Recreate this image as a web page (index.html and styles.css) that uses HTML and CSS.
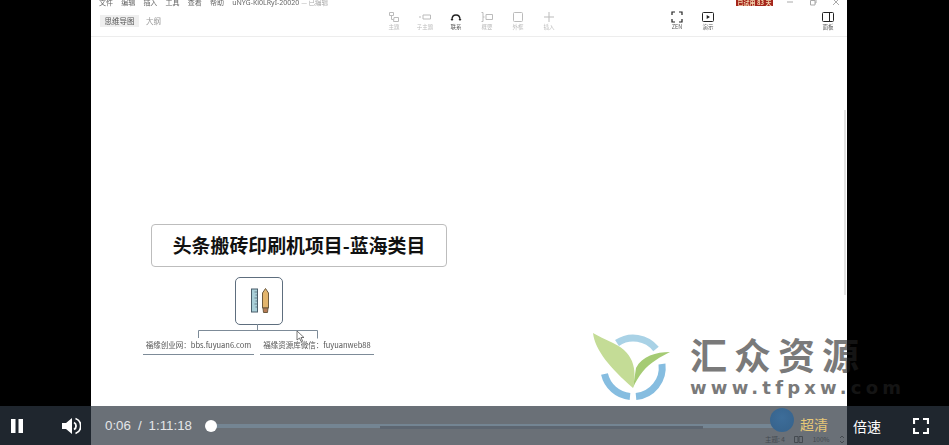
FILE: index.html
```html
<!DOCTYPE html>
<html lang="en">
<head>
  <meta charset="UTF-8">
  <title>视频播放</title>
  <link rel="stylesheet" href="styles.css">
</head>
<body>

<div class="player">
  <div class="stage">
    <div class="canvas">
      <!-- app window inside the video -->
      <div class="menu-row">
        <span class="menu">文件</span>
        <span class="menu">编辑</span>
        <span class="menu">插入</span>
        <span class="menu">工具</span>
        <span class="menu">查看</span>
        <span class="menu">帮助</span>
        <span class="doc-name">uNYG-Ki0LRyI-20020</span>
        <span class="doc-state">— 已编辑</span>
        <span class="trial">已试用 83 天</span>
        <div class="win-btns">
          <svg width="8" height="8" viewBox="0 0 8 8"><path d="M1 4h6" stroke="#aaa"/></svg>
          <svg width="8" height="8" viewBox="0 0 8 8"><path d="M1.500 2.500h4.500v4.500h-4.500zM3 2.500v-1.500h4v4h-1" fill="none" stroke="#aaa"/></svg>
          <svg width="8" height="8" viewBox="0 0 8 8"><path d="M1 1l6 6M7 1l-6 6" stroke="#aaa"/></svg>
        </div>
      </div>
      <div class="tool-row">
        <div class="tabs">
          <span class="tab tab-on">思维导图</span>
          <span class="tab">大纲</span>
        </div>
        <div class="tools">
          <div class="tool tool-off">
            <svg width="12" height="12" viewBox="0 0 12 12"><path d="M1.500 1.500h4v3h-4zM3.500 4.500v4h2M6 6.500h4.500v4h-5z" fill="none" stroke="#bbb"/></svg>
            <span>主题</span>
          </div>
          <div class="tool tool-off">
            <svg width="12" height="12" viewBox="0 0 12 12"><path d="M0 6h2M4 4h7.500v4h-7.500z" fill="none" stroke="#bbb"/></svg>
            <span>子主题</span>
          </div>
          <div class="tool">
            <svg width="12" height="12" viewBox="0 0 12 12"><path d="M2 8.500c0-6 8-6 8 0" fill="none" stroke="#222" stroke-width="1.300"/><path d="M0.500 8h3l-1.500 2zM8.500 8h3l-1.500 2z" fill="#222"/></svg>
            <span>联系</span>
          </div>
          <div class="tool tool-off">
            <svg width="12" height="12" viewBox="0 0 12 12"><path d="M0.500 1.500h1.500v9h-1.500M2 6h1.500M5 3.500h6.500v5h-6.500z" fill="none" stroke="#bbb"/></svg>
            <span>概要</span>
          </div>
          <div class="tool tool-off">
            <svg width="12" height="12" viewBox="0 0 12 12"><rect x="1.500" y="1.500" width="9" height="9" rx="1" fill="none" stroke="#bbb"/></svg>
            <span>外框</span>
          </div>
          <div class="tool tool-off">
            <svg width="12" height="12" viewBox="0 0 12 12"><path d="M6 1v10M1 6h10" stroke="#bbb"/></svg>
            <span>插入</span>
          </div>
        </div>
        <div class="tools-right">
          <div class="tool">
            <svg width="12" height="12" viewBox="0 0 12 12"><path d="M1 4v-3h3M8 1h3v3M11 8v3h-3M4 11h-3v-3" fill="none" stroke="#222" stroke-width="1.200"/></svg>
            <span>ZEN</span>
          </div>
          <div class="tool">
            <svg width="12" height="12" viewBox="0 0 12 12"><rect x="0.500" y="1.500" width="11" height="9" rx="1" fill="none" stroke="#222"/><path d="M4.700 4v4l3.300-2z" fill="#222"/></svg>
            <span>演示</span>
          </div>
        </div>
        <div class="tool tool-panel">
          <svg width="12" height="12" viewBox="0 0 12 12"><rect x="0.500" y="1.500" width="11" height="9" rx="1" fill="none" stroke="#222"/><path d="M7.500 1.500v9" stroke="#222"/></svg>
          <span>面板</span>
        </div>
      </div>

      <!-- mind map -->
      <div class="map">
        <div class="node-title">头条搬砖印刷机项目-蓝海类目</div>
        <div class="node-icon">
          <svg width="28" height="28" viewBox="0 0 28 28">
            <rect x="6.500" y="2" width="6" height="23" fill="#a9cfd8" stroke="#4b5f6c"/>
            <path d="M9.500 5h3M10.500 8h2M9.500 11h3M10.500 14h2M9.500 17h3M10.500 20h2" stroke="#4b5f6c" stroke-width=".7"/>
            <path d="M17.500 6l3-4.500 3 4.500v15h-6z" fill="#e3b56c" stroke="#6d5a3e"/>
            <path d="M18 21h5l-.5 4.500h-4z" fill="#b77b55" stroke="#6d5a3e"/>
          </svg>
        </div>
        <svg class="links" width="130" height="16" viewBox="0 0 130 16">
          <path d="M60.500 0v6.500M1.500 14v-7.500h119v8" fill="none" stroke="#7d8b98"/>
        </svg>
        <div class="node-sub node-sub-a">福缘创业网：bbs.fuyuan6.com</div>
        <div class="node-sub node-sub-b">福缘资源库微信：fuyuanweb88</div>
        <svg class="pointer" width="10" height="13" viewBox="0 0 10 13"><path d="M1 1v9l2.500-2 1.500 3.500 1.500-.7-1.500-3.300h3z" fill="#fff" stroke="#555" stroke-width=".8"/></svg>
      </div>

      <div class="scroll-thumb"></div>
    </div>

    <!-- watermark runs over the canvas edge -->
    <div class="watermark">
      <svg class="wm-logo" width="82" height="70" viewBox="0 0 82 70">
        <path d="M27 11a29 29 0 0 1 39 6" fill="none" stroke="#a9d2e6" stroke-width="7"/>
        <path d="M14.500 42a29 29 0 0 0 25.500 22.500M46 64.500a29 29 0 0 0 26-32.500" fill="none" stroke="#86bde0" stroke-width="7"/>
        <path d="M3 1C5 18 20 36 43 56C46 42 47 22 23 11C15 7 8 4 3 1z" fill="#c4dc96"/>
        <path d="M80 20C66 20 52 24 46 36L43 56C48 44 56 34 66 28C70 25 76 22 80 20z" fill="#a5cb74"/>
      </svg>
      <div class="wm-text">
        <div class="wm-cn">汇众资源</div>
        <div class="wm-en">www.tfpxw.com</div>
      </div>
    </div>
    <div class="letterbox"></div>
  </div>

  <div class="controls">
    <div class="ctrl-left">
      <svg width="14" height="16" viewBox="0 0 14 16"><path d="M1 1h4.500v14h-4.500zM8.500 1h4.500v14h-4.500z" fill="#fff"/></svg>
      <svg class="vol" width="20" height="20" viewBox="0 0 20 20"><path d="M1 7h4l6-5v16l-6-5h-4z" fill="#fff"/><path d="M13 6.500a4 4 0 0 1 0 7M14.500 2.500a8 8 0 0 1 0 15" fill="none" stroke="#fff" stroke-width="1.800"/></svg>
    </div>
    <div class="ctrl-mid">
      <span class="time">0:06</span>
      <span class="time-sep">/</span>
      <span class="time">1:11:18</span>
      <div class="track">
        <div class="knob"></div>
        <div class="buffered"></div>
      </div>
      <div class="avatar"></div>
      <span class="quality">超清</span>
      <div class="status">
        <span>主题: 4</span>
        <svg width="9" height="7" viewBox="0 0 9 7"><path d="M.5.500h3.500v6h-3.500zM5 .500h3.500v6h-3.500z" fill="none" stroke="#444a50"/></svg>
        <span>100%</span>
        <svg width="6" height="9" viewBox="0 0 6 9"><path d="M1 3l2-2 2 2M1 6l2 2 2-2" fill="none" stroke="#444a50"/></svg>
      </div>
    </div>
    <div class="ctrl-right">
      <span class="speed">倍速</span>
      <svg width="16" height="16" viewBox="0 0 16 16"><path d="M1 6v-5h5M10 1h5v5M15 10v5h-5M6 15h-5v-5" fill="none" stroke="#fff" stroke-width="2.200"/></svg>
    </div>
  </div>
</div>

</body>
</html>
```

FILE: styles.css
```css
* {
  box-sizing: border-box;
}
body {
  margin: 0;
  background-color: #000;
  font-family: "Noto Sans CJK SC", "Liberation Sans", sans-serif;
}
.player {
  width: 949px;
  height: 445px;
  display: flex;
  flex-direction: column;
  overflow: hidden;
}
.stage {
  position: relative;
  height: 406px;
  padding-left: 91px;
}
.canvas {
  position: relative;
  width: 756px;
  height: 406px;
  background-color: #fff;
  overflow: hidden;
}

/* app header */
.menu-row {
  height: 4px;
  padding-left: 8px;
  display: flex;
  align-items: center;
  font-size: 7px;
  line-height: 7px;
  color: #666;
  filter: blur(.3px);
  white-space: nowrap;
}
.menu {
  width: 22.200px;
}
.doc-name {
  width: 69px;
  font-size: 7px;
  color: #666;
  font-family: "Noto Sans", sans-serif;
}
.doc-state {
  color: #aaa;
  font-size: 6.500px;
}
.trial {
  margin-left: auto;
  align-self: flex-start;
  margin-top: -1px;
  width: 37px;
  height: 7px;
  background-color: #a5261c;
  color: #f3d6b0;
  font-size: 6px;
  font-weight: bold;
  text-align: center;
}
.win-btns {
  width: 74px;
  padding: 0 7px 0 13px;
  display: flex;
  justify-content: space-between;
}
.tool-row {
  height: 33px;
  padding: 5px 0 0 9px;
  border-bottom: 1px solid #ededed;
  display: flex;
  align-items: flex-start;
  position: relative;
}
.tabs {
  display: flex;
  align-items: center;
  gap: 7px;
  margin-top: 6px;
  width: 284px;
  font-size: 7.500px;
  color: #999;
  filter: blur(.3px);
}
.tab {
  height: 12px;
  line-height: 12px;
}
.tab-on {
  width: 39px;
  background-color: #efefef;
  color: #555;
  text-align: center;
}
.tools {
  display: flex;
  gap: 11px;
  margin-top: 2px;
}
.tools-right {
  display: flex;
  gap: 11px;
  margin-left: 108px;
  margin-top: 2px;
}
.tool {
  width: 20px;
  display: flex;
  flex-direction: column;
  align-items: center;
  font-size: 5.500px;
  line-height: 9px;
  color: #555;
}
.tool span {
  filter: blur(.25px);
}
.tool-off {
  color: #bbb;
}
.tool-panel {
  margin-left: 100px;
  margin-top: 2px;
}

/* mind map, nodes sit on a free canvas */
.map {
  position: absolute;
  left: 0;
  top: 0;
  width: 756px;
  height: 406px;
}
.node-title {
  position: absolute;
  left: 60px;
  top: 224px;
  width: 296px;
  height: 43px;
  border: 1px solid #bdbdbd;
  border-radius: 4px;
  font-size: 18.900px;
  font-weight: bold;
  line-height: 40px;
  text-align: center;
  color: #111;
}
.node-icon {
  position: absolute;
  left: 144px;
  top: 277px;
  width: 48px;
  height: 48px;
  border: 1px solid #5e6e7e;
  border-radius: 5px;
  display: flex;
  align-items: center;
  justify-content: center;
}
.links {
  position: absolute;
  left: 106px;
  top: 324px;
}
.node-sub {
  position: absolute;
  top: 338px;
  height: 17px;
  border-bottom: 1px solid #7d8b98;
  font-size: 7.500px;
  line-height: 14px;
  text-align: center;
  color: #555;
  white-space: nowrap;
  filter: blur(.2px);
}
.node-sub-a {
  left: 52px;
  width: 111px;
}
.node-sub-b {
  left: 169px;
  width: 114px;
}
.pointer {
  position: absolute;
  left: 205px;
  top: 330px;
}
.scroll-thumb {
  position: absolute;
  right: 1px;
  top: 110px;
  width: 2px;
  height: 185px;
  background-color: #e2e2e2;
}

/* watermark */
.watermark {
  position: absolute;
  left: 590px;
  top: 332px;
  display: flex;
  gap: 18px;
}
.wm-text {
  width: 216px;
  margin-top: 2px;
  font-weight: bold;
  color: #7a7a7a;
}
.wm-cn {
  font-size: 37px;
  line-height: 41px;
  letter-spacing: 7px;
  white-space: nowrap;
}
.wm-en {
  font-family: "DejaVu Sans", sans-serif;
  font-size: 18px;
  line-height: 26px;
  letter-spacing: 4.200px;
  white-space: nowrap;
}
/* black side of the video dims the watermark that runs past it */
.letterbox {
  position: absolute;
  left: 847px;
  top: 0;
  width: 102px;
  height: 406px;
  background-color: rgba(0, 0, 0, .84);
}

/* player controls */
.controls {
  height: 39px;
  display: flex;
  background-color: #1f262e;
  color: #fff;
}
.ctrl-left {
  width: 91px;
  padding-left: 10px;
  display: flex;
  align-items: center;
  gap: 37px;
}
.ctrl-mid {
  position: relative;
  width: 756px;
  padding-left: 14px;
  display: flex;
  align-items: center;
  background-color: #6a7077;
  font-family: "Liberation Sans", sans-serif;
  font-size: 13.300px;
  color: #e4e6e8;
}
.time-sep {
  margin: 0 7px;
}
.track {
  position: absolute;
  left: 120px;
  top: 18px;
  width: 564px;
  height: 4px;
  background-color: #748593;
}
.buffered {
  position: absolute;
  left: 169px;
  top: 2px;
  width: 323px;
  height: 3px;
  background-color: #5d6671;
}
.knob {
  position: absolute;
  left: -6px;
  top: -4px;
  width: 12px;
  height: 12px;
  border-radius: 50%;
  background-color: #fff;
  z-index: 1;
}
.avatar {
  position: absolute;
  left: 679px;
  top: 2px;
  width: 24px;
  height: 24px;
  border-radius: 50%;
  background: radial-gradient(circle at 50% 40%, #3d6d99, #35618a);
}
.quality {
  position: absolute;
  left: 709px;
  top: 8px;
  font-family: "Noto Sans CJK SC", sans-serif;
  font-size: 14px;
  line-height: 20px;
  color: #e8c877;
}
.status {
  position: absolute;
  left: 674px;
  bottom: 1px;
  width: 80px;
  display: flex;
  align-items: center;
  justify-content: space-between;
  font-family: "Noto Sans CJK SC", sans-serif;
  font-size: 6.500px;
  line-height: 10px;
  color: #444a50;
}
.ctrl-right {
  flex: 1;
  padding: 0 20px 0 6px;
  display: flex;
  align-items: center;
  justify-content: space-between;
}
.speed {
  font-size: 14px;
}
```
